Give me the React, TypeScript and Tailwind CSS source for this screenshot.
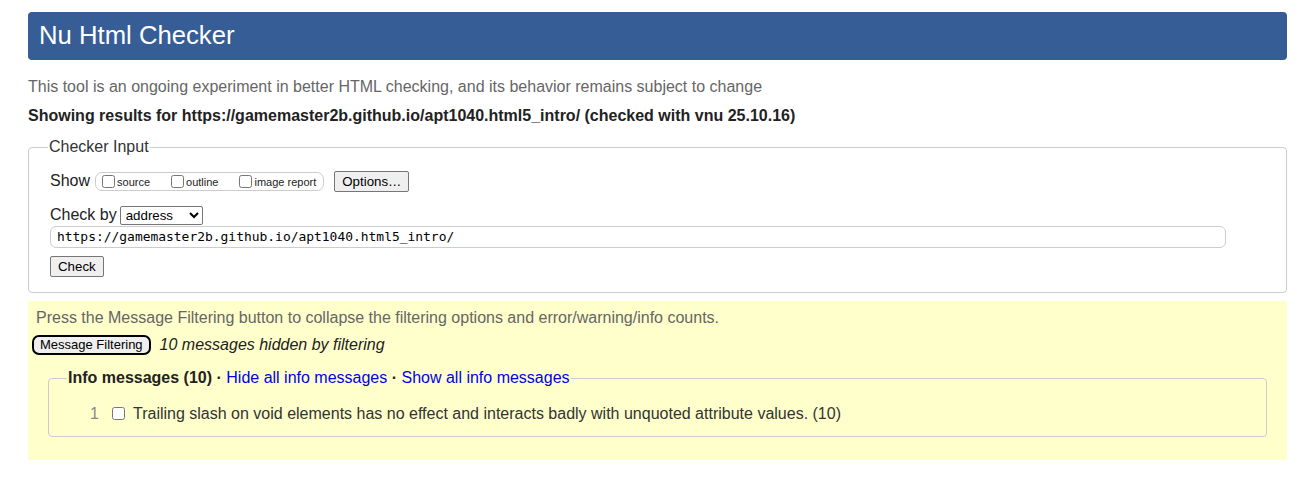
import React from "react";

export default function App() {
  return (
    <div className="min-h-[484px] bg-white pl-[28px] pr-[18px] pt-[12px] text-[16px] text-[#222]" style={{ fontFamily: '"Liberation Sans", Arial, sans-serif' }}>
      <h1 className="flex h-[48px] items-center rounded-[4px] bg-[#365d95] pb-[1px] pl-[11px] text-[25.7px] font-normal text-white">
        Nu Html Checker
      </h1>
      <p className="mt-[18px] text-[16px] leading-[18px] text-[#666]">
        This tool is an ongoing experiment in better HTML checking, and its behavior remains subject to change
      </p>
      <p className="mt-[11px] text-[16px] font-bold leading-[18px] text-[#222]">
        Showing results for https://gamemaster2b.github.io/apt1040.html5_intro/ (checked with vnu 25.10.16)
      </p>

      <fieldset className="mt-[13px] rounded-[4px] border border-[#ccc] px-[21px] pb-[14px] pt-[0px]">
        <legend className="-ml-[2px] px-[1px] text-[16px] leading-[18px] text-[#333]">Checker Input</legend>
        <div className="mt-[13px] flex items-center">
          <span className="text-[16px] text-[#222]">Show</span>
          <div className="ml-[5px] flex h-[19px] items-center rounded-[7px] border border-[#ccc] pl-[6px] pr-[7px] text-[11px] text-[#222]">
            <label className="flex items-center">
              <input type="checkbox" className="m-0 h-[13px] w-[13px]" />
              <span className="ml-[2px] mt-[3px]">source</span>
            </label>
            <label className="ml-[21px] flex items-center">
              <input type="checkbox" className="m-0 h-[13px] w-[13px]" />
              <span className="ml-[2px] mt-[3px]">outline</span>
            </label>
            <label className="ml-[21px] flex items-center">
              <input type="checkbox" className="m-0 h-[13px] w-[13px]" />
              <span className="ml-[2px] mt-[3px]">image report</span>
            </label>
          </div>
          <button className="ml-[10px] h-[21px] rounded-[2px] border border-[#767676] bg-[#efefef] px-[7px] text-[13.3px] leading-[15px] text-black">
            Options…
          </button>
        </div>
        <div className="mt-[10px] flex items-center">
          <span className="text-[16px] text-[#222]">Check by</span>
          <select className="ml-[3px] h-[19px] w-[83px] rounded-[2px] border border-[#767676] bg-white px-[1px] text-[13.3px] leading-[15px] text-black" defaultValue="address">
            <option value="address">address</option>
          </select>
        </div>
        <div className="-mt-[1px] flex h-[22px] w-[1176px] items-center rounded-[6px] border border-[#ccc] bg-white pl-[6px] text-[12.95px] text-black" style={{ fontFamily: '"DejaVu Sans Mono", monospace' }}>
          https://gamemaster2b.github.io/apt1040.html5_intro/
        </div>
        <button className="mt-[8px] h-[21px] rounded-[2px] border border-[#767676] bg-[#efefef] px-[7px] text-[13.3px] leading-[15px] text-black">
          Check
        </button>
      </fieldset>

      <div className="mt-[8px] h-[159px] bg-[#ffffcc] px-[4px] pt-[8px]">
        <p className="pl-[4px] text-[16px] leading-[18px] text-[#666]">
          Press the Message Filtering button to collapse the filtering options and error/warning/info counts.
        </p>
        <div className="mt-[6px] flex items-center">
          <button className="h-[20px] rounded-[7px] border-2 border-black bg-[#efefef] px-[6px] text-[13px] leading-[14px] text-black">
            Message Filtering
          </button>
          <span className="ml-[9px] text-[16px] italic text-[#222]">10 messages hidden by filtering</span>
        </div>
        <fieldset className="mx-[16px] mt-[12px] rounded-[4px] border border-[#ccc] pb-[10px]">
          <legend className="ml-[18px] px-[1px] text-[16px] leading-[18px]">
            <span className="font-bold text-[#222]">Info messages (10)</span>
            <span className="font-bold text-[#222]"> · </span>
            <a className="text-[#0000ee]" href="#">Hide all info messages</a>
            <span className="font-bold text-[#222]"> · </span>
            <a className="text-[#0000ee]" href="#">Show all info messages</a>
          </legend>
          <div className="mt-[15px] flex items-center">
            <span className="w-[50px] text-right text-[16px] text-[#888]">1</span>
            <input type="checkbox" className="mb-[2px] ml-[13px] h-[13px] w-[13px]" />
            <span className="ml-[8px] text-[16px] text-[#333]">
              Trailing slash on void elements has no effect and interacts badly with unquoted attribute values. (10)
            </span>
          </div>
        </fieldset>
      </div>
    </div>
  );
}
